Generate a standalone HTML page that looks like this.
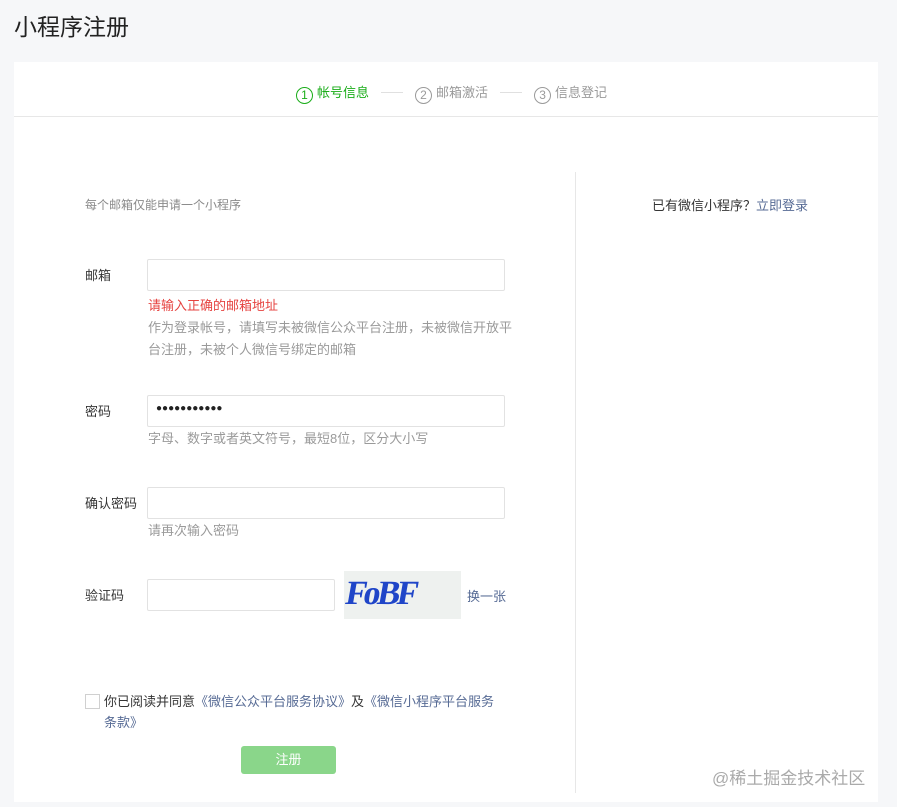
<!DOCTYPE html>
<html><head><meta charset="utf-8"><style>
body{margin:0;width:897px;height:807px;background:#f6f7f9;font-family:"Liberation Sans","Noto Sans CJK SC",sans-serif;position:relative;overflow:hidden}
.a{position:absolute;white-space:nowrap}
.card{position:absolute;left:14px;top:62px;width:864px;height:740px;background:#fff}
.inp{position:absolute;height:30px;border:1px solid #e2e2e2;border-radius:2px;background:#fff;box-sizing:border-box}
.lab{position:absolute;left:85px;font-size:13px;color:#353535}
.tip{position:absolute;left:148px;font-size:13px;color:#9a9a9a;line-height:22px}
.c{display:inline-block;width:15px;height:15px;border:1px solid;border-radius:50%;font-size:12px;line-height:15px;text-align:center;vertical-align:-2px;margin-right:4px}
.ln{display:inline-block;width:22px;height:1px;background:#e0e0e0;vertical-align:4px;margin:0 12px}
</style></head><body>
<div class="a" style="left:14px;top:8px;font-size:23px;color:#222">小程序注册</div>
<div class="card"></div>
<div class="a" style="left:14px;top:116px;width:864px;height:1px;background:#e7e7e7"></div>
<div class="a" style="left:296px;top:82px;font-size:13px;color:#9a9a9a">
<span style="color:#1aad19"><span class="c">1</span>帐号信息</span><span class="ln"></span><span class="c">2</span>邮箱激活<span class="ln"></span><span class="c">3</span>信息登记</div>
<div class="a" style="left:575px;top:172px;width:1px;height:621px;background:#e7e7e7"></div>
<div class="a" style="left:85px;top:196px;font-size:12px;color:#8a8a8a">每个邮箱仅能申请一个小程序</div>
<div class="a" style="left:652px;top:195px;font-size:13px;color:#353535">已有微信小程序？<span style="color:#576b95">立即登录</span></div>
<div class="lab" style="top:265px">邮箱</div>
<div class="inp" style="left:147px;top:259px;width:358px;height:32px"></div>
<div class="a" style="left:148px;top:295px;font-size:13px;color:#e64340">请输入正确的邮箱地址</div>
<div class="tip" style="top:317px;width:368px;white-space:normal">作为登录帐号，请填写未被微信公众平台注册，未被微信开放平台注册，未被个人微信号绑定的邮箱</div>
<div class="lab" style="top:401px">密码</div>
<div class="inp" style="left:147px;top:395px;width:358px;height:32px"></div>
<div class="a" style="left:156px;top:403px;font-size:10px;color:#222">●●●●●●●●●●●</div>
<div class="tip" style="top:428px">字母、数字或者英文符号，最短8位，区分大小写</div>
<div class="lab" style="top:493px">确认密码</div>
<div class="inp" style="left:147px;top:487px;width:358px;height:32px"></div>
<div class="tip" style="top:520px">请再次输入密码</div>
<div class="lab" style="top:585px">验证码</div>
<div class="inp" style="left:147px;top:579px;width:188px;height:32px"></div>
<div class="a" style="left:344px;top:571px;width:117px;height:48px;background:#eef1ef;overflow:hidden">
<div class="a" style="left:2px;top:4px;font:bold 34px 'Liberation Serif',serif;color:#1f45c8;letter-spacing:-3px;transform:skewX(-10deg)">FoBF</div></div>
<div class="a" style="left:467px;top:586px;font-size:13px;color:#576b95">换一张</div>
<div class="a" style="left:85px;top:694px;width:13px;height:13px;border:1px solid #d0d0d0;background:#fff"></div>
<div class="a" style="left:104px;top:691px;width:400px;white-space:normal;font-size:13px;color:#353535;line-height:21px">你已阅读并同意<span style="color:#576b95">《微信公众平台服务协议》</span>及<span style="color:#576b95">《微信小程序平台服务条款》</span></div>
<div class="a" style="left:241px;top:746px;width:95px;height:28px;background:#8ad68a;border-radius:3px;color:#fff;font-size:13px;text-align:center;line-height:28px">注册</div>
<div class="a" style="left:712px;top:764px;font-size:17px;color:#aaa">@稀土掘金技术社区</div>
</body></html>
